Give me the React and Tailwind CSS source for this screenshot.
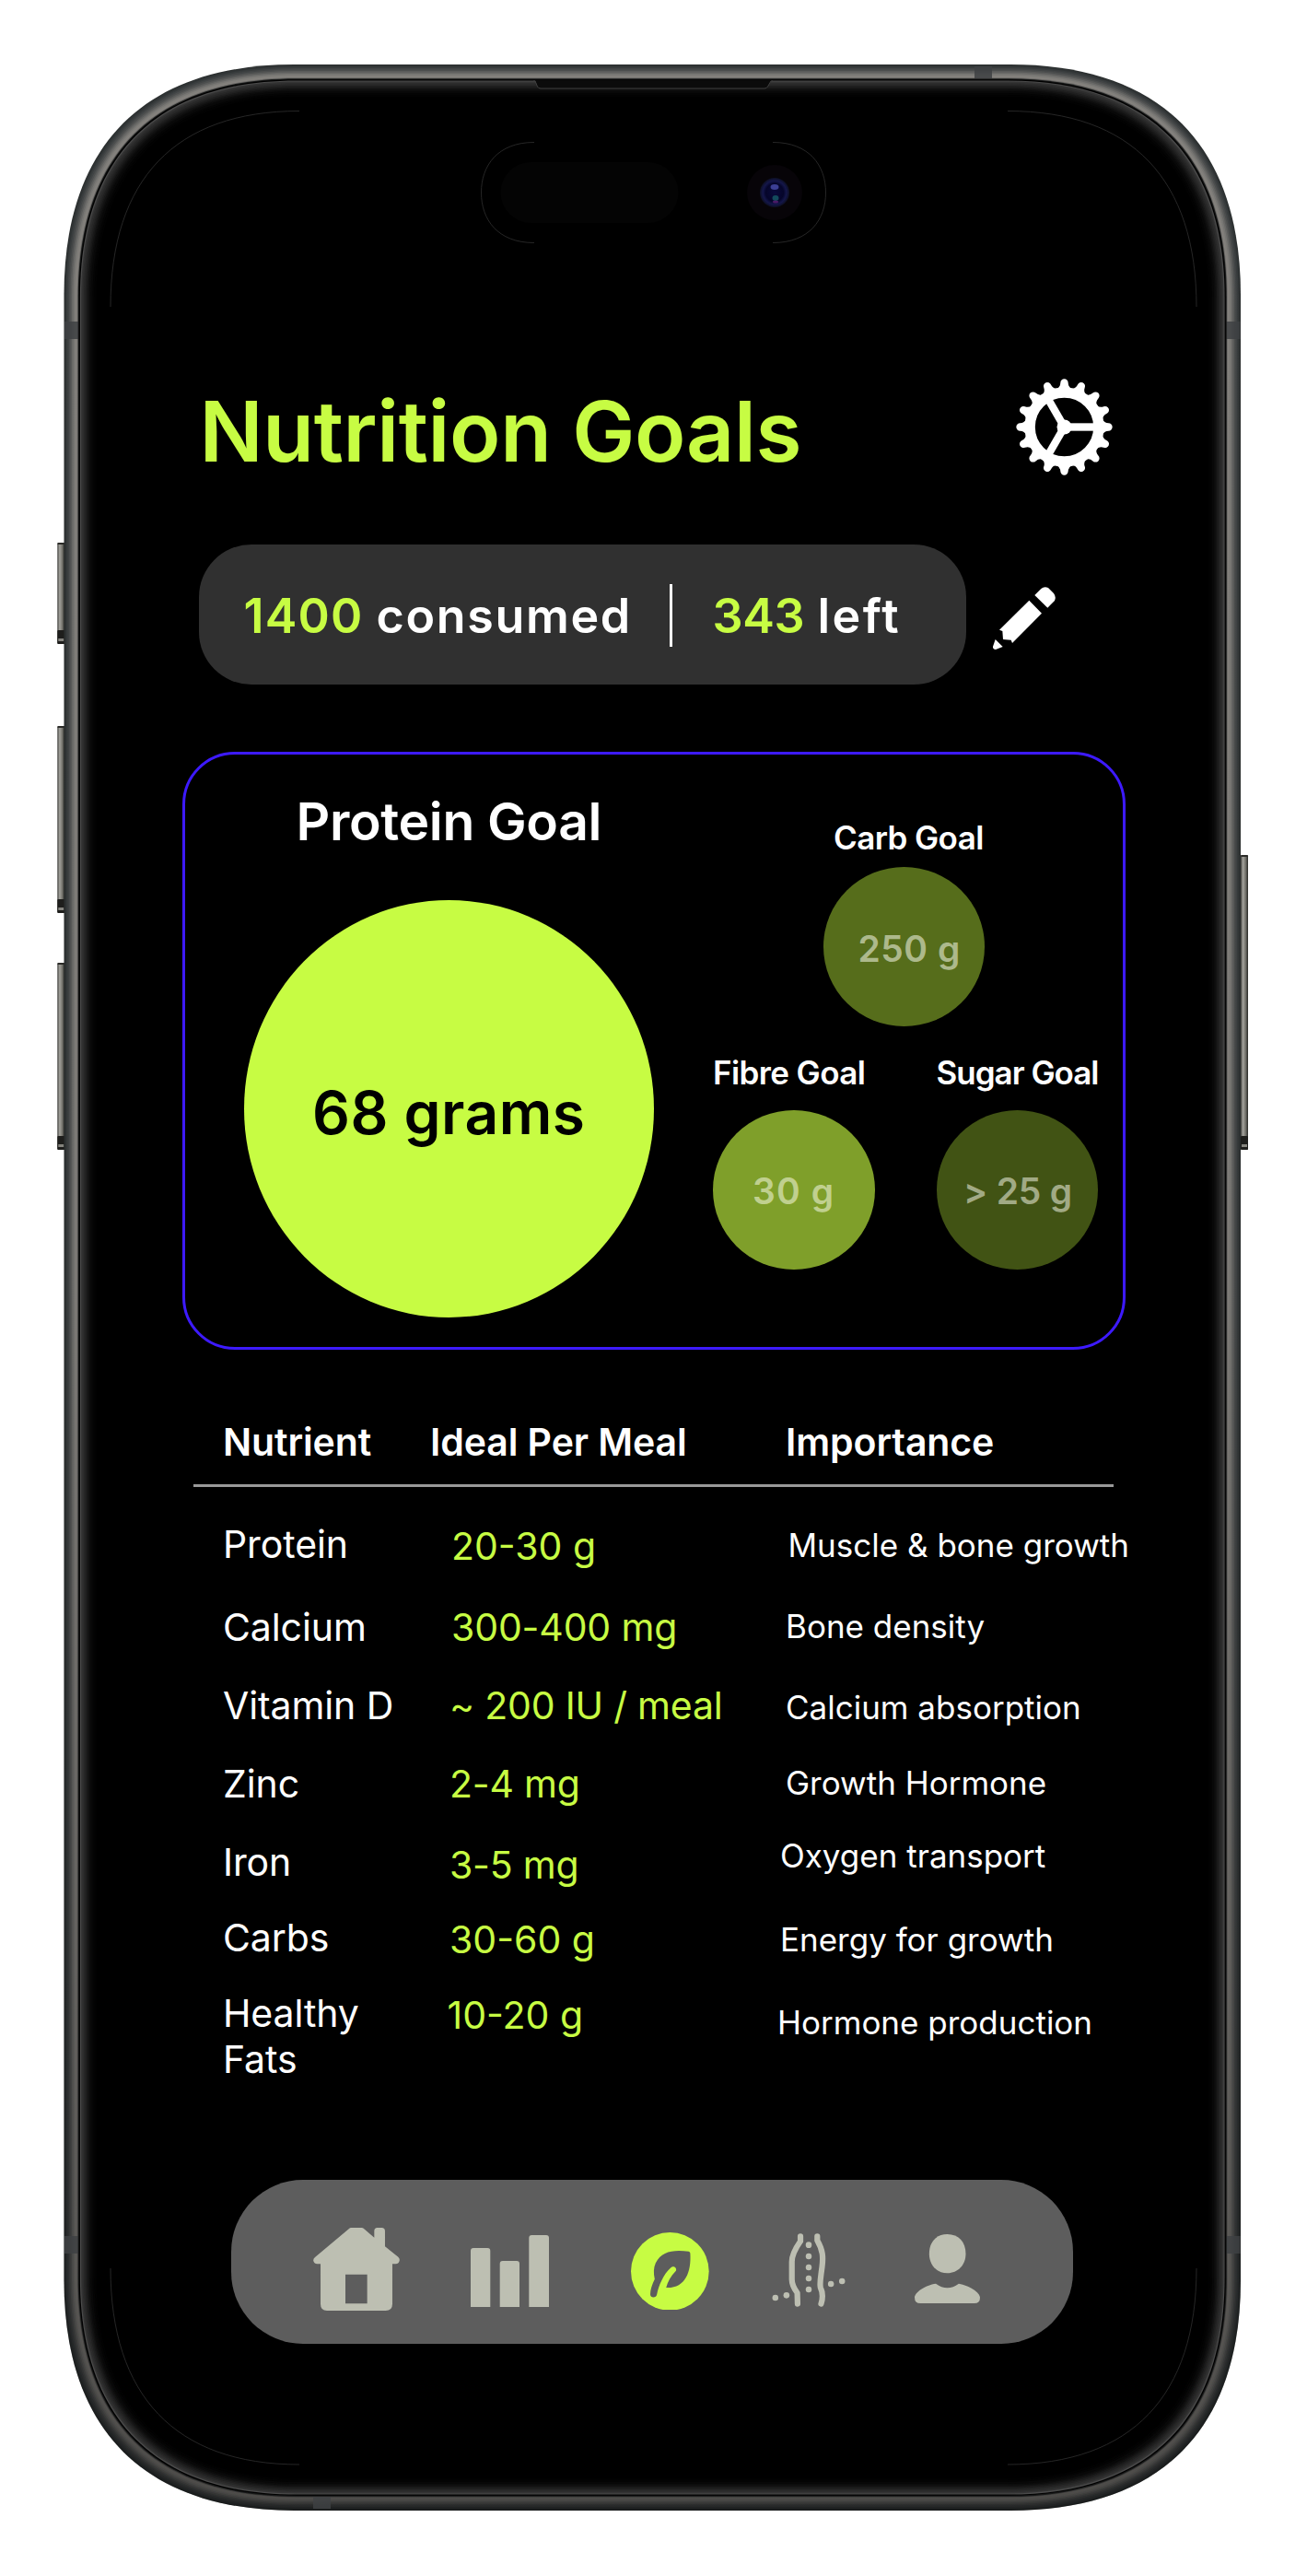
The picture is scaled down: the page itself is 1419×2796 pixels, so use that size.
import React from "react";

/* Smooth-cornered rectangle, inset from the outer edge of the handset. */
const OUTER = { x: 69.5, y: 70, w: 1277.5, h: 2655 };

function shell(i) {
  const x0 = OUTER.x + i;
  const y0 = OUTER.y + i;
  const x1 = OUTER.x + OUTER.w - i;
  const y1 = OUTER.y + OUTER.h - i;
  const l = 250 - i * 0.86;
  const c = l * 0.35;
  return `M${x0 + l} ${y0}H${x1 - l}C${x1 - c} ${y0} ${x1} ${y0 + c} ${x1} ${y0 + l}V${y1 - l}C${x1} ${y1 - c} ${x1 - c} ${y1} ${x1 - l} ${y1}H${x0 + l}C${x0 + c} ${y1} ${x0} ${y1 - c} ${x0} ${y1 - l}V${y0 + l}C${x0} ${y0 + c} ${x0 + c} ${y0} ${x0 + l} ${y0}Z`;
}

const METAL = [
  [0, "#2b2f2f"], [1, "#303435"], [2.5, "#383c3d"], [4, "#414445"], [5.5, "#4c4e4e"], [7, "#5a5b5a"],
  [8.5, "#696967"], [10, "#777673"], [11.5, "#817f7b"], [13, "#85827e"], [14.3, "#6b6a67"],
];
const GLASS = [
  [15.2, "#191a1a"], [16.2, "#000000"], [17.4, "#4a4a4a"], [18.6, "#343434"], [20, "#2d2d2d"], [21.5, "#272727"],
  [23, "#202020"], [24.5, "#191919"], [26, "#121212"], [27.5, "#0c0c0c"], [29, "#080808"], [31, "#040404"],
  [33, "#020202"], [35, "#000000"],
];
const SCREEN_CORNERS = [
  "M120 333C120 195 190 120.5 325 120.5",
  "M1299 333C1299 195 1229 120.5 1094 120.5",
  "M120 2462C120 2600 190 2675 325 2675",
  "M1299 2462C1299 2600 1229 2675 1094 2675",
];
const SIDE_BUTTONS = [
  [62.3, 589, 110], [62.3, 788, 203], [62.3, 1045, 203], [1347, 928, 320],
];
const ANTENNAS = [
  [70, 349, 15.5, 19], [1331, 349, 15.5, 19], [70, 2427, 15.5, 19], [1331, 2427, 15.5, 19],
  [1058, 72, 19, 13], [340, 2710, 19, 13],
];

function Handset() {
  return (
    <svg className="absolute inset-0" width="1419" height="2796" viewBox="0 0 1419 2796" fill="none" aria-hidden="true">
      <defs>
        <linearGradient id="dim" x1="0" y1="70" x2="0" y2="2725" gradientUnits="userSpaceOnUse">
          <stop offset="0" stopColor="#000" stopOpacity="0" />
          <stop offset="0.5" stopColor="#000" stopOpacity="0.05" />
          <stop offset="0.9" stopColor="#000" stopOpacity="0.32" />
          <stop offset="1" stopColor="#000" stopOpacity="0.42" />
        </linearGradient>
        <linearGradient id="btn" x1="0" y1="0" x2="1" y2="0">
          <stop offset="0" stopColor="#3c3c39" />
          <stop offset="0.3" stopColor="#a3a29c" />
          <stop offset="0.65" stopColor="#77766f" />
          <stop offset="1" stopColor="#262724" />
        </linearGradient>
        <radialGradient id="lens" cx="0.5" cy="0.5" r="0.5">
          <stop offset="0" stopColor="#0a0a3c" />
          <stop offset="0.6" stopColor="#05052a" />
          <stop offset="0.8" stopColor="#14164a" />
          <stop offset="1" stopColor="#0d0f22" />
        </radialGradient>
      </defs>
      {SIDE_BUTTONS.map(([x, y, h]) => (
        <g key={y + "-" + x}>
          <rect x={x} y={y} width="8" height={h} rx="1.5" fill="url(#btn)" />
          <rect x={x} y={y} width="8" height="2" rx="1" fill="#2b2b28" />
          <rect x={x} y={y + h - 15} width="8" height="15" rx="1" fill="#1e1e1c" />
          <rect x={x + 1} y={y + h - 6} width="6" height="3" fill="#85847e" />
        </g>
      ))}
      {METAL.map(([i, c]) => <path key={i} d={shell(i)} fill={c} />)}
      <path d={shell(0)} fill="url(#dim)" />
      {ANTENNAS.map(([x, y, w, h]) => <rect key={x + "-" + y} x={x} y={y} width={w} height={h} fill="#3e4143" fillOpacity="0.85" />)}
      {GLASS.map(([i, c]) => <path key={i} d={shell(i)} fill={c} />)}
      <path d="M581 87H838L833.5 94Q832.500 96 830 96H587Q584.500 96 583.500 94Z" fill="#0b0b0b" />
      <path d="M579 88H581L583.500 94Q584.500 96 587 96H830Q832.500 96 833.500 94L837 88H839" stroke="#3f3f3f" strokeWidth="1" />
      {SCREEN_CORNERS.map((d) => <path key={d} d={d} stroke="#303030" strokeWidth="0.8" />)}
      <path d="M580 154.500C540 154.500 522.500 180 522.500 209C522.500 238 540 263.500 580 263.500" stroke="#303030" strokeWidth="0.8" />
      <path d="M839 154.500C879 154.500 896.500 180 896.500 209C896.500 238 879 263.500 839 263.500" stroke="#303030" strokeWidth="0.8" />
      <rect x="543.500" y="176" width="193" height="66" rx="33" fill="#040404" />
      <circle cx="841" cy="209" r="30" fill="#070408" />
      <circle cx="841" cy="209" r="16" fill="url(#lens)" />
      <ellipse cx="841" cy="203" rx="4.500" ry="3" fill="#3c3f94" />
      <ellipse cx="842" cy="215" rx="3.500" ry="3" fill="#134a5c" />
      <ellipse cx="842" cy="219" rx="3" ry="1.500" fill="#4a1a66" />
    </svg>
  );
}

function GearIcon() {
  return (
    <svg width="105" height="105" viewBox="-157.500 -157.500 315 315" fill="#fff" stroke="none">
      <circle r="112" fill="none" stroke="#fff" strokeWidth="34" />
      {Array.from({ length: 16 }, (_, i) => (
        <path key={i} transform={`rotate(${i * 22.5})`} d="M-24 -125Q-13 -131 -12.500 -144A12.500 12.500 0 0 1 12.500 -144Q13 -131 24 -125Z" />
      ))}
      {[0, 120, 240].map((a) => <rect key={a} transform={`rotate(${a})`} x="0" y="-12.500" width="104" height="25" />)}
      <circle r="24" />
    </svg>
  );
}

function PencilIcon() {
  return (
    <svg width="68" height="68.300" viewBox="683 741 204 205" fill="#fff">
      <path d="M819 768L840 747Q850 738 863 744L881 762Q890 774 884 786L861 809Z" />
      <path d="M801 785L842 827L746 924L742 914L716 912L714 885L704 881Z" />
      <path d="M691 912L715 936L692 945Q682 945 683 935Z" />
    </svg>
  );
}

function HomeIcon() {
  return (
    <svg width="94" height="90.300" viewBox="299 205 282 271" fill="#bdbfb2">
      <path fillRule="evenodd" d="M422 205H457Q461 205 464 208L498 237V216Q498 205 508 205H522Q533 205 533 216V266L576 300Q582 306 580 313Q577 323 568 323H557V453Q557 475 535 475H344Q323 475 323 453V323H312Q303 323 300 314Q298 307 305 301L416 208Q419 205 422 205ZM404 357V452H475V357Z" />
    </svg>
  );
}

function BarsIcon() {
  return (
    <svg width="85" height="78" viewBox="0 0 85 78" fill="#bdbfb2">
      <path d="M0 78V17Q0 14 3 14H18.300Q21.300 14 21.300 17V78Z" />
      <path d="M31.700 78V31Q31.700 28 34.700 28H50Q53 28 53 31V78Z" />
      <path d="M63.300 78V3Q63.300 0 66.300 0H82Q85 0 85 3V78Z" />
    </svg>
  );
}

function LeafIcon() {
  return (
    <svg width="84.700" height="84.700" viewBox="130 219 246 254" preserveAspectRatio="none">
      <ellipse cx="253" cy="346" rx="123" ry="127" fill="#c7fc43" />
      <path fill="#5d5d5d" d="M312 281Q317 282 317 287C321 350 300 402 241 399C246 379 256 361 272 344C276 332 262 326 256 334C232 356 217 394 212 421C210 434 191 434 191 421C191 405 197 388 205 371C201 352 201 334 208 319C226 280 264 275 312 281Z" />
    </svg>
  );
}

function WaistIcon() {
  return (
    <svg width="80" height="80" viewBox="574 222 232 240" preserveAspectRatio="none" fill="#bdbfb2">
      <g stroke="#bdbfb2" strokeWidth="18" fill="none" strokeLinecap="round" strokeLinejoin="round">
        <path d="M664 232V248C647 273 637 292 637 315V372C637 393 646 405 654 416L655 452" />
        <path d="M717 232V245C735 277 736 300 732 332C728 365 724 382 727 398C736 418 735 433 729 452" />
      </g>
      {[[690, 260], [690, 297], [690, 333], [690, 369], [690, 405], [585, 432], [620, 424], [760, 387], [795, 378]].map(([x, y]) => (
        <ellipse key={x + "-" + y} cx={x} cy={y} rx="9.500" ry="10" />
      ))}
    </svg>
  );
}

function PersonIcon() {
  return (
    <svg width="71" height="75" viewBox="1024 225 206 225" preserveAspectRatio="none" fill="#bdbfb2">
      <path d="M1127 225C1162 225 1185 250 1185 289C1185 326 1160 352 1127 352C1094 352 1070 326 1070 289C1070 250 1092 225 1127 225Z" />
      <path d="M1091 386Q1127 413 1163 386C1197 392 1230 415 1230 431Q1230 450 1212 450H1042Q1024 450 1024 431C1024 415 1058 390 1091 386Z" />
    </svg>
  );
}

const ROWS = [
  { row: "h-[90.200px]", name: "Protein", amount: "20-30 g", a: "mt-[2px] ml-[1px]", why: "Muscle & bone growth", w: "mt-[1.200px] ml-[2.500px]" },
  { row: "h-[84.800px]", name: "Calcium", amount: "300-400 mg", a: "ml-[1px] tracking-[-0.150px]", why: "Bone density", w: "mt-[-1.200px]" },
  { row: "h-[84.800px]", name: "Vitamin\u00a0D", amount: "~ 200 IU / meal", a: "ml-[-1px] tracking-[-0.200px]", why: "Calcium absorption", w: "mt-[1.700px]" },
  { row: "h-[85.400px]", name: "Zinc", amount: "2-4 mg", a: "ml-[-1px] tracking-[-0.200px]", why: "Growth Hormone", w: "mt-[-1.200px]" },
  { row: "h-[81.200px]", name: "Iron", amount: "3-5 mg", a: "mt-[2.400px] ml-[-1px] tracking-[-0.200px]", why: "Oxygen transport", w: "mt-[-7.600px] ml-[-6px]" },
  { row: "h-[82px]", name: "Carbs", amount: "30-60 g", a: "mt-[2.500px] ml-[-1px]", why: "Energy for growth", w: "mt-[2.400px] ml-[-6px]" },
  { row: "h-[100px]", name: "Healthy Fats", amount: "10-20 g", a: "mt-[2.500px] ml-[-3.500px]", why: "Hormone production", w: "mt-[10.500px] ml-[-9px]" },
];

function NutrientTable() {
  return (
    <section className="mt-[74.800px] text-[41px] leading-[50px] whitespace-nowrap text-white">
      <div className="grid grid-cols-[225px_386px_360px] pl-[242px] font-semibold tracking-[-0.100px]">
        <span>Nutrient</span>
        <span>Ideal Per Meal</span>
        <span>Importance</span>
      </div>
      <div className="mt-[21.500px] ml-[210px] h-[3px] w-[999px] bg-[#999999]" />
      <div className="mt-[37px] pl-[242px]">
        {ROWS.map((r) => (
          <div key={r.name} className={`grid grid-cols-[247px_364px_380px] items-start ${r.row}`}>
            <span className="w-[180px] tracking-[-0.100px] whitespace-normal">{r.name}</span>
            <span className={`text-[#c7fc43] ${r.a}`}>{r.amount}</span>
            <span className={`text-[35px] ${r.w}`}>{r.why}</span>
          </div>
        ))}
      </div>
    </section>
  );
}

function SmallGoal({ title, titleClass, className, value, valueClass }) {
  return (
    <div className="flex w-[175.500px] flex-col">
      <h3 className={`text-[35px] leading-[40px] font-semibold text-white ${titleClass}`}>{title}</h3>
      <div className={`flex w-full items-center rounded-[50%] text-[39px] font-semibold ${className}`}>
        <span className={valueClass}>{value}</span>
      </div>
    </div>
  );
}

function GoalsCard() {
  return (
    <section className="mt-[73.300px] ml-[198px] flex h-[649px] w-[1023.500px] rounded-[57px] border-3 border-[#3d1aff] whitespace-nowrap">
      <div className="ml-[64px] flex w-[445px] flex-col">
        <h2 className="mt-[43.500px] ml-[56.500px] text-[57px] leading-[60px] font-semibold tracking-[-0.350px] text-white">Protein Goal</h2>
        <div className="mt-[54.500px] flex h-[453px] items-center rounded-[50%] bg-[#c7fc43] pt-[10px] pl-[74px] text-[64px] font-semibold tracking-[0.500px] text-black">
          68 grams
        </div>
      </div>
      <div className="ml-[64px] flex flex-col">
        <div className="mt-[69.700px] ml-[119.500px]">
          <SmallGoal
            title="Carb Goal"
            titleClass="ml-[11.500px] tracking-[-0.600px]"
            className="mt-[12.700px] h-[173px] bg-[#566d1b] text-[#adb98c]"
            value="250 g"
            valueClass="ml-[38px] pt-[4px] tracking-[0.500px]"
          />
        </div>
        <div className="mt-[29.600px] flex gap-[67px]">
          <SmallGoal
            title="Fibre Goal"
            titleClass="tracking-[-0.600px]"
            className="mt-[21px] h-[173px] bg-[#7f9f2a] text-[#c0d08f]"
            value="30 g"
            valueClass="ml-[43px] pt-[4px] tracking-[1.100px]"
          />
          <SmallGoal
            title="Sugar Goal"
            titleClass="tracking-[-1px]"
            className="mt-[21px] h-[173px] bg-[#415314] text-[#a1aa85]"
            value="> 25 g"
            valueClass="ml-[29.500px] pt-[4px] tracking-[-0.200px]"
          />
        </div>
      </div>
    </section>
  );
}

export default function App() {
  return (
    <div className="relative h-[2796px] w-[1419px] overflow-hidden bg-white font-['Inter',sans-serif]">
      <Handset />
      <main className="relative flex flex-col pt-[411px]">
        <header className="flex h-[105px] items-center pl-[216.500px]">
          <h1 className="mt-[8px] w-[886px] text-[91px] leading-[100px] font-semibold tracking-[-0.300px] whitespace-nowrap text-[#c7fc43]">
            Nutrition Goals
          </h1>
          <GearIcon />
        </header>

        <div className="mt-[74.700px] flex items-center pl-[215.500px]">
          <div className="flex h-[152px] w-[833.500px] items-center rounded-[57px] bg-[#303030] text-[52px] font-semibold whitespace-nowrap text-white">
            <span className="ml-[49px] w-[144px] pt-[4px] tracking-[1.200px] text-[#c7fc43]">1400</span>
            <span className="w-[318.500px] pt-[4px] tracking-[1.650px]">consumed</span>
            <span className="mt-[3px] h-[67.500px] w-[3px] bg-white" />
            <span className="ml-[43.500px] w-[114px] pt-[4px] tracking-[-0.400px] text-[#c7fc43]">343</span>
            <span className="pt-[4px] tracking-[2.400px]">left</span>
          </div>
          <div className="mt-[9px] ml-[28.700px]">
            <PencilIcon />
          </div>
        </div>

        <GoalsCard />
        <NutrientTable />

        <nav className="mt-[106px] ml-[250.700px] flex h-[178px] w-[914.500px] items-start rounded-[78px] bg-[#5d5d5d]">
          <div className="mt-[52.300px] ml-[89px]"><HomeIcon /></div>
          <div className="mt-[60.500px] ml-[77px]"><BarsIcon /></div>
          <div className="mt-[57px] ml-[89.200px]"><LeafIcon /></div>
          <div className="mt-[58px] ml-[68.200px]"><WaistIcon /></div>
          <div className="mt-[59px] ml-[75px]"><PersonIcon /></div>
        </nav>
      </main>
    </div>
  );
}
